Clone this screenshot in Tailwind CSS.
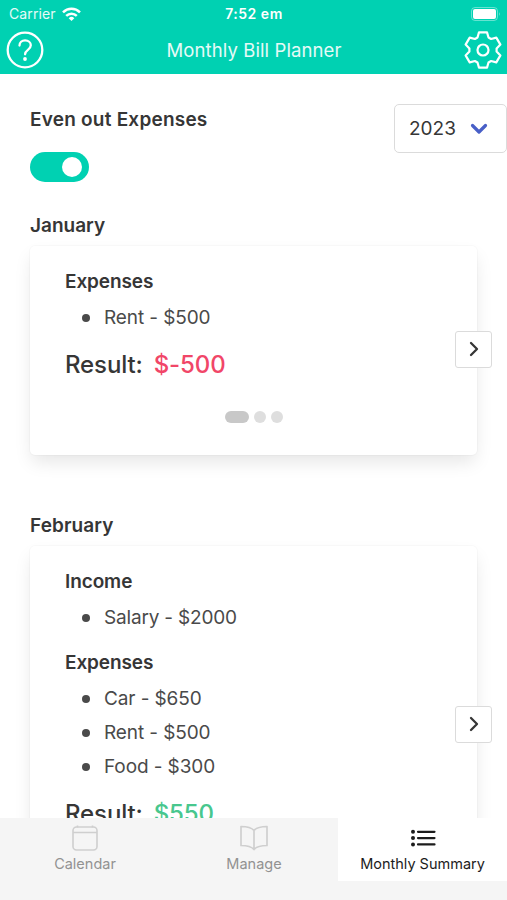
<!DOCTYPE html>
<html lang="en">
<head>
<meta charset="utf-8">
<title>Monthly Bill Planner</title>
<script src="https://cdn.jsdelivr.net/npm/@tailwindcss/browser@4"></script>
</head>
<body class="bg-white">
<div class="flex h-[900px] w-[507px] flex-col overflow-hidden bg-white font-['Inter','Liberation_Sans',sans-serif] text-[#363636]">
  <header class="h-[74px] shrink-0 bg-[#00d1b2] text-white">
    <div class="grid h-[27px] grid-cols-3 items-center pl-[9px] pr-[6px] text-[13px] leading-[28px]">
      <div class="flex items-center gap-[6px] text-white/90"><span class="text-[14px] tracking-[0.1px]">Carrier</span>
        <svg width="19" height="15" viewBox="0 0 19 15" fill="none" stroke="white" stroke-width="2.5"><path d="M1 5.3a12.2 12.2 0 0 1 17 0M4.2 8.8a7.6 7.6 0 0 1 10.6 0"/><path d="M9.5 14l-2.8-2.8a4 4 0 0 1 5.6 0z" fill="white" stroke="none"/></svg>
      </div>
      <div class="pr-[2px] text-center text-[14px] font-semibold tracking-[0.5px]"><span>7:52 em</span></div>
      <svg class="justify-self-end" width="30" height="14" viewBox="0 0 30 14"><rect x=".5" y=".5" width="26" height="13" rx="3.5" fill="none" stroke="white" stroke-opacity=".4"/><rect x="2" y="2" width="23" height="10" rx="2" fill="white"/><path d="M28 5v4q1.600-2 0-4" fill="white" fill-opacity=".5"/></svg>
    </div>
    <div class="flex h-[46px] items-center justify-between pl-[6px] pr-[5px]">
      <svg width="38" height="38" viewBox="0 0 38 38" fill="none" stroke="white" stroke-linecap="round"><circle cx="19" cy="19" r="17.300" stroke-width="2.300"/><path d="M13.500 14.600c0-3.300 2.400-5.200 5.600-5.200s5.700 2 5.700 4.900c0 4.700-5.700 4.400-5.700 9" stroke-width="2.300"/><circle cx="19" cy="28" r="1.900" fill="white" stroke="none"/></svg>
      <h1 class="pt-[2px] text-[18.500px] tracking-[0.1px] text-white/90"><span>Monthly Bill Planner</span></h1>
      <svg width="38" height="38" viewBox="-19 -19 38 38" fill="none" stroke="white" stroke-width="2.200" stroke-linejoin="round"><path d="M-5.500-12.500L-4-17.700H4L5.500-12.500L8.100-11L13.300-12.400L17.400-5.400L13.600-1.500V1.500L17.400 5.400L13.300 12.400L8.100 11L5.500 12.500L4 17.700H-4L-5.500 12.500L-8.100 11L-13.300 12.400L-17.400 5.400L-13.600 1.500V-1.500L-17.400-5.400L-13.300-12.400L-8.100-11Z"/><circle r="5.500"/></svg>
    </div>
  </header>

  <main class="min-h-0 flex-1 overflow-hidden pl-[30px]">
    <div class="flex items-start justify-between pt-[30px]">
      <div>
        <h2 class="mt-[2px] text-[19px] leading-[28px] font-semibold tracking-[0.22px]"><span>Even out Expenses</span></h2>
        <div class="mt-[18px] flex h-[30px] w-[59px] items-center justify-end rounded-full bg-[#00d1b2] pr-[7px]"><div class="size-5 rounded-full bg-white"></div></div>
      </div>
      <div class="flex h-[49px] w-[113px] items-center justify-between rounded-[5px] border-[1.500px] border-[#dbdbdb] pl-[14px] pr-[18px] text-[19px]"><span class="pt-px">2023</span>
        <svg width="18" height="12" viewBox="0 0 18 12" fill="none" stroke="#485fc7" stroke-width="3.200" stroke-linecap="round" stroke-linejoin="round"><path d="M2.500 2.500L9 9l6.500-6.500"/></svg>
      </div>
    </div>

    <h3 class="mt-[30px] text-[19px] leading-[28px] font-semibold"><span>January</span></h3>
    <section class="relative mt-[6px] h-[209px] w-[447px] rounded-[5px] bg-white px-[35px] pt-[22px] shadow-[0_9px_18px_-2px_rgba(10,10,10,0.1),0_0_0_1px_rgba(10,10,10,0.02)]">
      <h4 class="text-[19px] leading-[28px] font-semibold tracking-[-0.1px]"><span>Expenses</span></h4>
      <ul class="mt-[5px] text-[19px] leading-[34px] tracking-[-0.1px] text-[#4a4a4a]">
        <li class="flex items-center gap-[14px] pl-[17px]"><i class="size-2 rounded-full bg-[#4a4a4a]"></i><span>Rent - $500</span></li>
      </ul>
      <p class="mt-[13px] flex gap-[11px] text-[24px] leading-[34px] font-medium tracking-[-0.12px]"><span>Result:</span><span class="text-[#f14668]">$-500</span></p>
      <div class="mt-[29px] flex justify-center gap-[5px] pl-[1px]"><i class="h-3 w-6 rounded-full bg-[#c8c8c8]"></i><i class="size-3 rounded-full bg-[#dedede]"></i><i class="size-3 rounded-full bg-[#dedede]"></i></div>
      <button class="absolute top-[85px] left-[425px] flex h-[37px] w-[37px] items-center justify-center rounded-[3px] border-[1.500px] border-[#dbdbdb] bg-white pb-[2px]"><svg width="10" height="16" viewBox="0 0 10 16" fill="none" stroke="#363636" stroke-width="2.300" stroke-linecap="round" stroke-linejoin="round"><path d="M2 2l6 6-6 6"/></svg></button>
    </section>

    <h3 class="mt-[57px] text-[19px] leading-[28px] font-semibold tracking-[0.1px]"><span>February</span></h3>
    <section class="relative mt-[6px] h-[358px] w-[447px] rounded-[5px] bg-white px-[35px] pt-[22px] shadow-[0_9px_18px_-2px_rgba(10,10,10,0.1),0_0_0_1px_rgba(10,10,10,0.02)]">
      <h4 class="text-[19px] leading-[28px] font-semibold tracking-[-0.1px]"><span>Income</span></h4>
      <ul class="mt-[5px] text-[19px] leading-[34px] tracking-[-0.18px] text-[#4a4a4a]">
        <li class="flex items-center gap-[14px] pl-[17px]"><i class="size-2 rounded-full bg-[#4a4a4a]"></i><span>Salary - $2000</span></li>
      </ul>
      <h4 class="mt-[14px] text-[19px] leading-[28px] font-semibold tracking-[-0.1px]"><span>Expenses</span></h4>
      <ul class="mt-[5px] text-[19px] leading-[34px] tracking-[-0.1px] text-[#4a4a4a]">
        <li class="flex items-center gap-[14px] pl-[17px]"><i class="size-2 rounded-full bg-[#4a4a4a]"></i><span>Car - $650</span></li>
        <li class="flex items-center gap-[14px] pl-[17px]"><i class="size-2 rounded-full bg-[#4a4a4a]"></i><span>Rent - $500</span></li>
        <li class="flex items-center gap-[14px] pl-[17px]"><i class="size-2 rounded-full bg-[#4a4a4a]"></i><span>Food - $300</span></li>
      </ul>
      <p class="mt-[13px] flex gap-[11px] text-[24px] leading-[34px] font-medium tracking-[-0.12px]"><span>Result:</span><span class="text-[#48c78e]">$550</span></p>
      <button class="absolute top-[160px] left-[425px] flex h-[37px] w-[37px] items-center justify-center rounded-[3px] border-[1.500px] border-[#dbdbdb] bg-white pb-[2px]"><svg width="10" height="16" viewBox="0 0 10 16" fill="none" stroke="#363636" stroke-width="2.300" stroke-linecap="round" stroke-linejoin="round"><path d="M2 2l6 6-6 6"/></svg></button>
    </section>
  </main>

  <nav class="z-10 grid h-[82px] shrink-0 grid-cols-[170px_168px_169px] items-start bg-[#f5f5f5] text-[14.500px] leading-[20px] text-[#929292]">
    <a class="flex h-[63px] flex-col items-center pt-[6px]">
      <svg width="28" height="28" viewBox="0 0 28 28" fill="none" stroke="#cfcfcf" stroke-width="1.600"><rect x="2" y="3" width="24" height="23" rx="3.500"/><path d="M2 8.500h24M6.500 3.500V1.500M21.500 3.500V1.500"/></svg>
      <span class="mt-[2px]">Calendar</span>
    </a>
    <a class="flex h-[63px] flex-col items-center pt-[6px]">
      <svg width="30" height="28" viewBox="0 0 30 28" fill="none" stroke="#cfcfcf" stroke-width="1.700" stroke-linejoin="round"><path d="M15 6.500c-2.500-3-7-4-13-4v19c6 0 10.500 1 13 4 2.500-3 7-4 13-4v-19c-6 0-10.500 1-13 4zv19"/></svg>
      <span class="mt-[2px]">Manage</span>
    </a>
    <a class="flex h-[63px] flex-col items-center bg-white pt-[6px] text-[#1c1c1c]">
      <svg width="28" height="28" viewBox="0 0 28 28" fill="#1c1c1c" stroke="#1c1c1c" stroke-width="2.200" stroke-linecap="round"><path d="M9 7.800h16.500M9 14.100h16.500M9 20.400h16.500"/><g stroke="none"><circle cx="4" cy="7.800" r="2"/><circle cx="4" cy="14.100" r="2"/><circle cx="4" cy="20.400" r="2"/></g></svg>
      <span class="mt-[2px]">Monthly Summary</span>
    </a>
  </nav>
</div>
</body>
</html>
